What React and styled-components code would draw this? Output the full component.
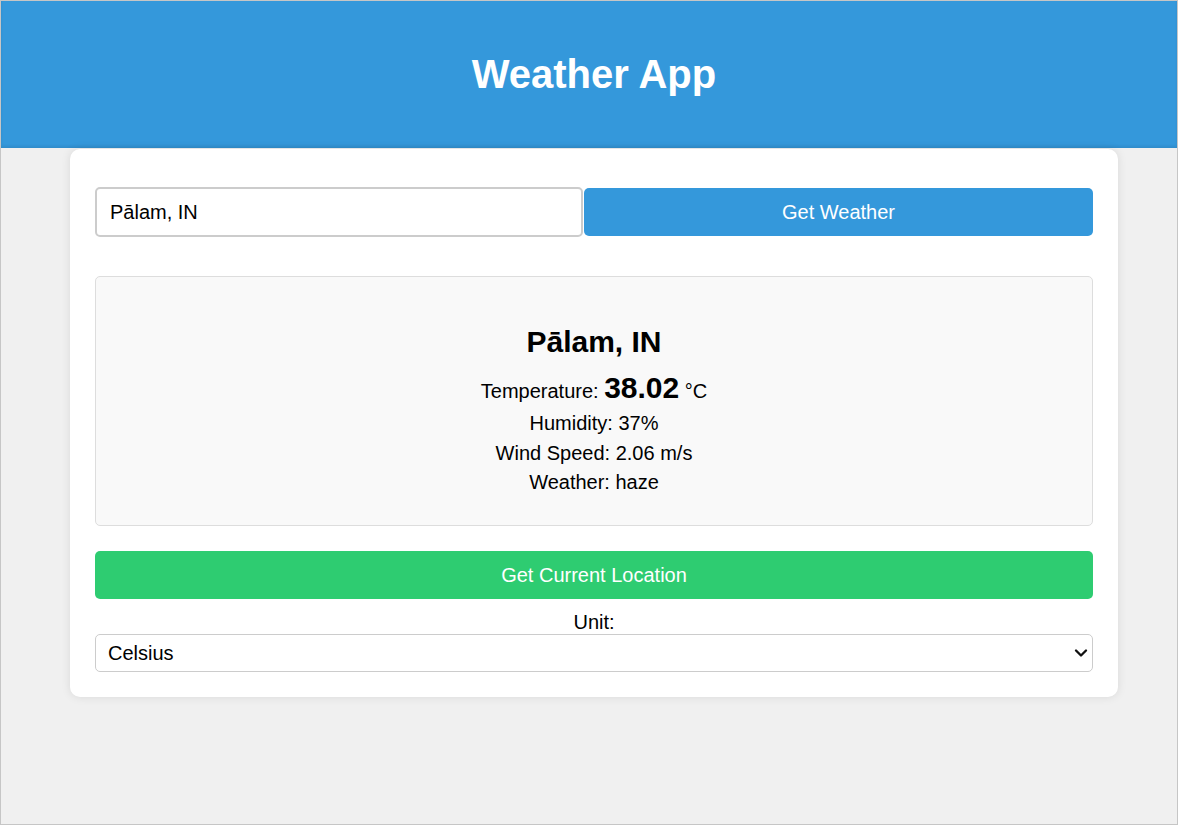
import React, { useState } from 'react';
import styled, { createGlobalStyle } from 'styled-components';
import { ChevronDown } from 'lucide-react';

const GlobalStyle = createGlobalStyle`
  * {
    box-sizing: border-box;
  }

  html, body {
    margin: 0;
    padding: 0;
    overflow: hidden;
  }

  body {
    font-family: "Liberation Sans", Arial, sans-serif;
    background: #f0f0f0;
    color: #000;
  }
`;

const Page = styled.div`
  width: 100vw;
  height: 100vh;
  border: 1px solid #c6c6c6;
  background: #f0f0f0;
  overflow: hidden;
`;

const Header = styled.header`
  height: 147px;
  background: #3498db;
  box-shadow: inset 0 -2px 3px rgba(0, 0, 0, 0.08);
  display: flex;
  align-items: center;
  justify-content: center;
  padding-left: 10px;
`;

const Title = styled.h1`
  margin: 0;
  font-size: 40px;
  font-weight: bold;
  color: #fff;
`;

const Main = styled.main`
  display: flex;
  justify-content: center;
  padding: 1px 0 0 10px;
`;

const Card = styled.section`
  width: 1048px;
  background: #fff;
  border-radius: 10px;
  box-shadow: 0 0 10px rgba(0, 0, 0, 0.1);
  padding: 38px 25px 25px;
  display: flex;
  flex-direction: column;
`;

const SearchForm = styled.form`
  display: flex;
  align-items: center;
  gap: 1px;
`;

const CityInput = styled.input`
  width: 488px;
  height: 50px;
  border: 2px solid #ccc;
  border-radius: 5px;
  padding: 0 13px;
  font-family: inherit;
  font-size: 20px;
  color: #000;
  outline: none;
`;

const Button = styled.button`
  height: 48px;
  width: ${(p) => (p.$grow ? 'auto' : '100%')};
  flex: ${(p) => (p.$grow ? 1 : 'none')};
  border: none;
  border-radius: 5px;
  background: ${(p) => p.$color};
  color: #fff;
  font-family: inherit;
  font-size: 20px;
  cursor: pointer;
`;

const WeatherBox = styled.div`
  margin: 39px 0 25px;
  height: 250px;
  background: #f9f9f9;
  border: 1px solid #ddd;
  border-radius: 5px;
  padding-top: 47px;
  text-align: center;
`;

const City = styled.h2`
  margin: 0 0 10px;
  font-size: 30px;
  line-height: 36px;
  font-weight: bold;
`;

const Line = styled.p`
  margin: 0;
  font-size: 20px;
  line-height: ${(p) => (p.$tall ? '36px' : '29.5px')};
`;

const Temp = styled.span`
  font-size: 30px;
  font-weight: bold;
`;

const UnitLabel = styled.label`
  display: block;
  margin-top: 11px;
  font-size: 20px;
  line-height: 24px;
  text-align: center;
`;

const SelectWrap = styled.div`
  position: relative;
`;

const UnitSelect = styled.select`
  width: 100%;
  height: 38px;
  appearance: none;
  border: 1px solid #ccc;
  border-radius: 5px;
  background: #fff;
  padding: 0 12px;
  font-family: inherit;
  font-size: 20px;
  color: #000;
  outline: none;
`;

const Arrow = styled.span`
  position: absolute;
  right: 2px;
  top: 9px;
  display: flex;
  pointer-events: none;
  color: #111;
`;

export default function App() {
  const [city, setCity] = useState('Pālam, IN');
  const [unit, setUnit] = useState('metric');

  return (
    <>
      <GlobalStyle />
      <Page>
        <Header>
          <Title>Weather App</Title>
        </Header>
        <Main>
          <Card>
            <SearchForm onSubmit={(e) => e.preventDefault()}>
              <CityInput value={city} onChange={(e) => setCity(e.target.value)} />
              <Button type="submit" $grow $color="#3498db">Get Weather</Button>
            </SearchForm>

            <WeatherBox>
              <City>Pālam, IN</City>
              <Line $tall>
                Temperature: <Temp>38.02</Temp> °C
              </Line>
              <Line>Humidity: 37%</Line>
              <Line>Wind Speed: 2.06 m/s</Line>
              <Line>Weather: haze</Line>
            </WeatherBox>

            <Button type="button" $color="#2ecc71">Get Current Location</Button>

            <UnitLabel htmlFor="unit">Unit:</UnitLabel>
            <SelectWrap>
              <UnitSelect id="unit" value={unit} onChange={(e) => setUnit(e.target.value)}>
                <option value="metric">Celsius</option>
                <option value="imperial">Fahrenheit</option>
              </UnitSelect>
              <Arrow>
                <ChevronDown size={20} strokeWidth={2.8} />
              </Arrow>
            </SelectWrap>
          </Card>
        </Main>
      </Page>
    </>
  );
}
